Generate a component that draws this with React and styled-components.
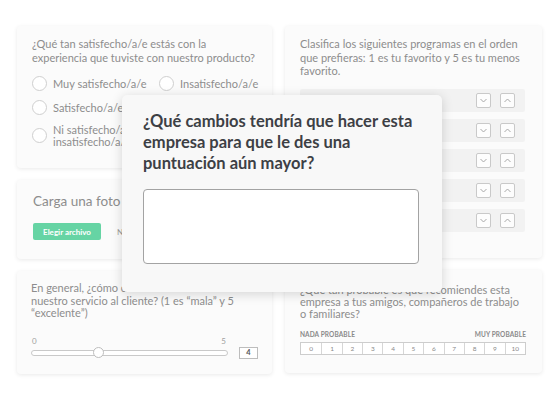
import React from "react";
import styled, { createGlobalStyle } from "styled-components";

const Global = createGlobalStyle`
  html, body { margin: 0; padding: 0; background: #ffffff; }
  body { font-family: "Lato", "Open Sans", sans-serif; }
  * { box-sizing: border-box; }
`;

const Page = styled.div`
  position: relative;
  width: 557px;
  height: 400px;
  overflow: hidden;
  padding: 26px 15px 0 17px;
  display: grid;
  grid-template-columns: 255px 257px;
  column-gap: 13px;
  align-items: start;
`;

const Column = styled.div`
  display: flex;
  flex-direction: column;
  gap: 12px;
`;

const Card = styled.div`
  height: ${(p) => p.$h}px;
  background: #fbfbfb;
  border-radius: 4px;
  box-shadow: 0 1px 4px rgba(0, 0, 0, 0.09);
  padding: ${(p) => p.$pad || "11px 15px 0 15px"};
  overflow: hidden;
`;

const Question = styled.div`
  font-size: 11px;
  line-height: ${(p) => p.$lh || 13.7}px;
  color: #8d8d8d;
  white-space: nowrap;
`;

const RadioGrid = styled.div`
  margin-top: 12px;
  display: grid;
  grid-template-columns: 127px 1fr;
  row-gap: 9px;
`;

const RadioItem = styled.div`
  display: flex;
  align-items: center;
  gap: 6px;
  font-size: 11px;
  line-height: 11.5px;
  color: #8d8d8d;
  white-space: nowrap;
`;

const Circle = styled.span`
  flex: none;
  width: 15px;
  height: 15px;
  border-radius: 50%;
  border: 1px solid #cfcfcf;
  background: #fff;
`;

const RankList = styled.div`
  margin-top: 11px;
  display: flex;
  flex-direction: column;
  gap: 7px;
`;

const RankRow = styled.div`
  height: 23px;
  background: #f2f2f2;
  border-radius: 2px;
  display: flex;
  align-items: center;
  justify-content: flex-end;
  gap: 9px;
  padding-right: 10px;
`;

const ArrowBtn = styled.span`
  width: 15px;
  height: 15px;
  border: 1px solid #c9c9c9;
  border-radius: 2px;
  background: #fdfdfd;
  display: flex;
  align-items: center;
  justify-content: center;
`;

const Chevron = ({ up }) => (
  <svg width="7" height="5" viewBox="0 0 7 5">
    <polyline
      points={up ? "0.5,4 3.5,1 6.5,4" : "0.5,1 3.5,4 6.5,1"}
      fill="none"
      stroke="#a8a8a8"
      strokeWidth="1"
    />
  </svg>
);

const Upload = styled.div`
  font-size: 13.5px;
  color: #8d8d8d;
  line-height: 16px;
  white-space: nowrap;
`;

const UploadRow = styled.div`
  margin-top: 14px;
  display: flex;
  align-items: center;
  gap: 16px;
`;

const GreenButton = styled.span`
  width: 68px;
  height: 17px;
  background: #66d4a4;
  border-radius: 2px;
  color: #fff;
  font-size: 8px;
  font-weight: 700;
  display: flex;
  align-items: center;
  justify-content: center;
`;

const SmallGray = styled.span`
  font-size: 8px;
  color: #9a9a9a;
  white-space: nowrap;
`;

const SliderLabels = styled.div`
  margin-top: 16px;
  width: 197px;
  display: flex;
  justify-content: space-between;
  font-size: 8px;
  color: #a0a0a0;
  padding: 0 2px 0 1px;
`;

const SliderRow = styled.div`
  margin-top: 1px;
  display: flex;
  align-items: center;
  gap: 11px;
`;

const Track = styled.div`
  position: relative;
  width: 197px;
  height: 6px;
  border: 1px solid #c9c9c9;
  border-radius: 3px;
  background: #fff;
`;

const Thumb = styled.span`
  position: absolute;
  top: 50%;
  width: 11px;
  height: 11px;
  margin: -5.5px 0 0 -5.5px;
  border-radius: 50%;
  border: 1px solid #bdbdbd;
  background: #fff;
`;

const ValueBox = styled.span`
  width: 19px;
  height: 12px;
  border: 1px solid #bdbdbd;
  background: #fff;
  font-size: 7.5px;
  font-weight: 700;
  color: #555;
  display: flex;
  align-items: center;
  justify-content: center;
`;

const ScaleLabels = styled.div`
  margin-top: 10px;
  width: 226px;
  display: flex;
  justify-content: space-between;
  font-size: 6.5px;
  font-weight: 700;
  letter-spacing: 0.1px;
  color: #8a8a8a;
`;

const Scale = styled.div`
  margin-top: 4px;
  width: 226px;
  height: 13px;
  display: grid;
  grid-template-columns: repeat(11, 1fr);
  border: 1px solid #cdcdcd;
  background: #fff;
`;

const ScaleCell = styled.span`
  border-left: ${(p) => (p.$first ? "none" : "1px solid #d6d6d6")};
  font-size: 6.5px;
  color: #8a8a8a;
  display: flex;
  align-items: center;
  justify-content: center;
`;

const Modal = styled.div`
  position: absolute;
  left: 122px;
  top: 95px;
  width: 320px;
  height: 197px;
  background: #f8f8f8;
  border-radius: 5px;
  box-shadow: 0 2px 12px rgba(0, 0, 0, 0.16);
  padding: 16px 23px 0 21px;
`;

const ModalTitle = styled.div`
  font-size: 16.5px;
  font-weight: 700;
  line-height: 21px;
  color: #3d4045;
`;

const TextArea = styled.div`
  margin-top: 15px;
  width: 276px;
  height: 75px;
  border: 1px solid #a3a3a3;
  border-radius: 4px;
  background: #fff;
`;

export default function App() {
  return (
    <>
      <Global />
      <Page>
        <Column>
          <Card $h={142}>
            <Question>
              ¿Qué tan satisfecho/a/e estás con la
              <br />
              experiencia que tuviste con nuestro producto?
            </Question>
            <RadioGrid>
              <RadioItem>
                <Circle />
                Muy satisfecho/a/e
              </RadioItem>
              <RadioItem>
                <Circle />
                Insatisfecho/a/e
              </RadioItem>
              <RadioItem>
                <Circle />
                Satisfecho/a/e
              </RadioItem>
              <RadioItem>
                <Circle />
              </RadioItem>
              <RadioItem>
                <Circle />
                <span>
                  Ni satisfecho/a/e
                  <br />
                  insatisfecho/a/e
                </span>
              </RadioItem>
            </RadioGrid>
          </Card>
          <Card $h={79} $pad="13px 16px 0 16px">
            <Upload>Carga una foto tuya</Upload>
            <UploadRow>
              <GreenButton>Elegir archivo</GreenButton>
              <SmallGray>Ningún archivo seleccionado</SmallGray>
            </UploadRow>
          </Card>
          <Card $h={103} $pad="11px 14px 0 14px">
            <Question $lh={12.6}>
              En general, ¿cómo calificarías
              <br />
              nuestro servicio al cliente? (1 es “mala” y 5
              <br />
              “excelente”)
            </Question>
            <SliderLabels>
              <span>0</span>
              <span>5</span>
            </SliderLabels>
            <SliderRow>
              <Track>
                <Thumb style={{ left: `${(4 / 12) * 100 + 1}%` }} />
              </Track>
              <ValueBox>4</ValueBox>
            </SliderRow>
          </Card>
        </Column>
        <Column>
          <Card $h={232} $pad="11px 17px 0 15px">
            <Question>
              Clasifica los siguientes programas en el orden
              <br />
              que prefieras: 1 es tu favorito y 5 es tu menos
              <br />
              favorito.
            </Question>
            <RankList>
              {[0, 1, 2, 3, 4].map((i) => (
                <RankRow key={i}>
                  <ArrowBtn>
                    <Chevron />
                  </ArrowBtn>
                  <ArrowBtn>
                    <Chevron up />
                  </ArrowBtn>
                </RankRow>
              ))}
            </RankList>
          </Card>
          <Card $h={103} $pad="14px 15px 0 15px">
            <Question $lh={12.2}>
              ¿Qué tan probable es que recomiendes esta
              <br />
              empresa a tus amigos, compañeros de trabajo
              <br />o familiares?
            </Question>
            <ScaleLabels>
              <span>NADA PROBABLE</span>
              <span>MUY PROBABLE</span>
            </ScaleLabels>
            <Scale>
              {Array.from({ length: 11 }, (_, i) => (
                <ScaleCell key={i} $first={i === 0}>
                  {i}
                </ScaleCell>
              ))}
            </Scale>
          </Card>
        </Column>
        <Modal>
          <ModalTitle>
            ¿Qué cambios tendría que hacer esta
            <br />
            empresa para que le des una
            <br />
            puntuación aún mayor?
          </ModalTitle>
          <TextArea />
        </Modal>
      </Page>
    </>
  );
}
